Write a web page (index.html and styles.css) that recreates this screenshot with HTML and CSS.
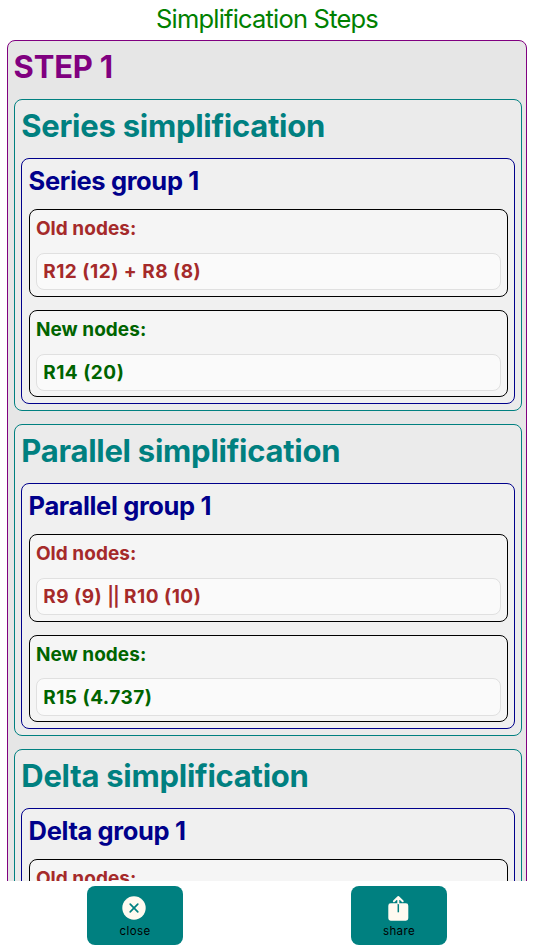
FILE: index.html
```
<!DOCTYPE html>
<html lang="en">
<head>
    <meta charset="UTF-8">
    <meta name="viewport" content="width=device-width, initial-scale=1.0">
    <title>Simplification Steps</title>
    <link rel="stylesheet" href="styles.css">
</head>
<body>
    <header>
        <h1>Simplification Steps</h1>
    </header>
    <main>
        <section class="step">
            <h2>STEP 1</h2>

            <div class="simplification">
                <h3>Series simplification</h3>
                <div class="group">
                    <h4>Series group 1</h4>
                    <div class="nodes old">
                        <h5>Old nodes:</h5>
                        <p>R12 (12) + R8 (8)</p>
                    </div>
                    <div class="nodes new">
                        <h5>New nodes:</h5>
                        <p>R14 (20)</p>
                    </div>
                </div>
            </div>

            <div class="simplification">
                <h3>Parallel simplification</h3>
                <div class="group">
                    <h4>Parallel group 1</h4>
                    <div class="nodes old">
                        <h5>Old nodes:</h5>
                        <p>R9 (9) <span class="bars">||</span> R10 (10)</p>
                    </div>
                    <div class="nodes new">
                        <h5>New nodes:</h5>
                        <p>R15 (4.737)</p>
                    </div>
                </div>
            </div>

            <div class="simplification">
                <h3>Delta simplification</h3>
                <div class="group">
                    <h4>Delta group 1</h4>
                    <div class="nodes old">
                        <h5>Old nodes:</h5>
                    </div>
                </div>
            </div>
        </section>
    </main>
    <footer>
        <button type="button">
            <svg width="28" height="28" viewBox="0 0 28 28">
                <circle cx="13" cy="15" r="11.7" fill="#fffaf0"/>
                <path d="M9.2 11.2l7.6 7.6M16.8 11.2l-7.6 7.6" stroke="#008080" stroke-width="1.7" stroke-linecap="round"/>
            </svg>
            <span>close</span>
        </button>
        <button type="button">
            <svg width="28" height="28" viewBox="0 0 28 28">
                <path d="M5.7 10.3h15.200a2.400 2.400 0 0 1 2.400 2.400v12.600a2.400 2.400 0 0 1-2.400 2.400H5.700a2.400 2.400 0 0 1-2.400-2.400V12.700a2.400 2.400 0 0 1 2.400-2.400z" fill="#fffaf0"/>
                <path d="M13.300 10.300v9" stroke="#008080" stroke-width="1.500"/>
                <path d="M13.300 10.300V4M8.900 8.200l4.400-4.200 4.400 4.200" fill="none" stroke="#fffaf0" stroke-width="2" stroke-linecap="round" stroke-linejoin="round"/>
            </svg>
            <span>share</span>
        </button>
    </footer>
</body>
</html>
```

FILE: styles.css
```
* {
    box-sizing: border-box;
}

body {
    font-family: Inter, "Liberation Sans", sans-serif;
    margin: 0;
    height: 100vh;
    display: flex;
    flex-direction: column;
    background: white;
    overflow: hidden;
}

h1, h2, h3, h4, h5, p {
    margin: 0;
    white-space: nowrap;
}

header {
    flex: none;
    height: 40px;
    text-align: center;
}

h1 {
    color: green;
    font-size: 25.5px;
    font-weight: 400;
    line-height: 38px;
    letter-spacing: -0.8px;
}

main {
    flex: 1;
    min-height: 0;
    padding: 0.3px 6.7px 0;
    overflow: hidden;
}

.step, .simplification, .group, .nodes {
    border: 1px solid;
    border-radius: 8px;
    padding: 6.3px 6px 5.8px 6.3px;
}

.step {
    border-color: purple;
    background: #e6e6e6;
    padding-right: 4.8px;
}

.simplification {
    border-color: teal;
    background: #ebebeb;
}

.group {
    border-color: darkblue;
    background: #f0f0f0;
}

.nodes {
    border-color: black;
    background: #f5f5f5;
}

.simplification + .simplification,
.nodes + .nodes {
    margin-top: 13px;
}

h2, h3 {
    font-size: 31px;
    font-weight: 700;
    line-height: 39px;
    margin-bottom: 12.6px;
}

h2 {
    color: purple;
    letter-spacing: -0.2px;
    margin-left: -0.4px;
    line-height: 38px;
    margin-bottom: 13.6px;
}

h3 {
    color: teal;
    letter-spacing: -0.26px;
}

h4 {
    color: darkblue;
    font-size: 25.5px;
    font-weight: 700;
    line-height: 31px;
    margin-bottom: 12.8px;
    letter-spacing: -0.36px;
}

h5 {
    font-size: 19px;
    font-weight: 700;
    line-height: 25px;
    margin-bottom: 11.4px;
    letter-spacing: 0.05px;
}

.nodes p {
    border: 1px solid #e0e0e0;
    border-radius: 8px;
    padding: 7.2px 6.3px 5.4px;
    background: #fafafa;
    font-size: 19px;
    font-weight: 700;
    line-height: 22.6px;
    letter-spacing: 0.5px;
}

.nodes .bars {
    font-weight: 600;
    letter-spacing: -0.9px;
}

.old h5, .old p {
    color: brown;
}

.new h5, .new p {
    color: darkgreen;
}

footer {
    flex: none;
    height: 69px;
    display: flex;
    justify-content: space-around;
    padding: 5px 3px 0;
}

button {
    width: 96px;
    height: 58.5px;
    padding: 7px 0 0;
    border: none;
    border-radius: 8px;
    background: teal;
    display: flex;
    flex-direction: column;
    align-items: center;
    font-family: inherit;
    font-size: 11.5px;
    line-height: 20px;
    letter-spacing: 0.4px;
    color: black;
}

button svg {
    flex: none;
}
```
